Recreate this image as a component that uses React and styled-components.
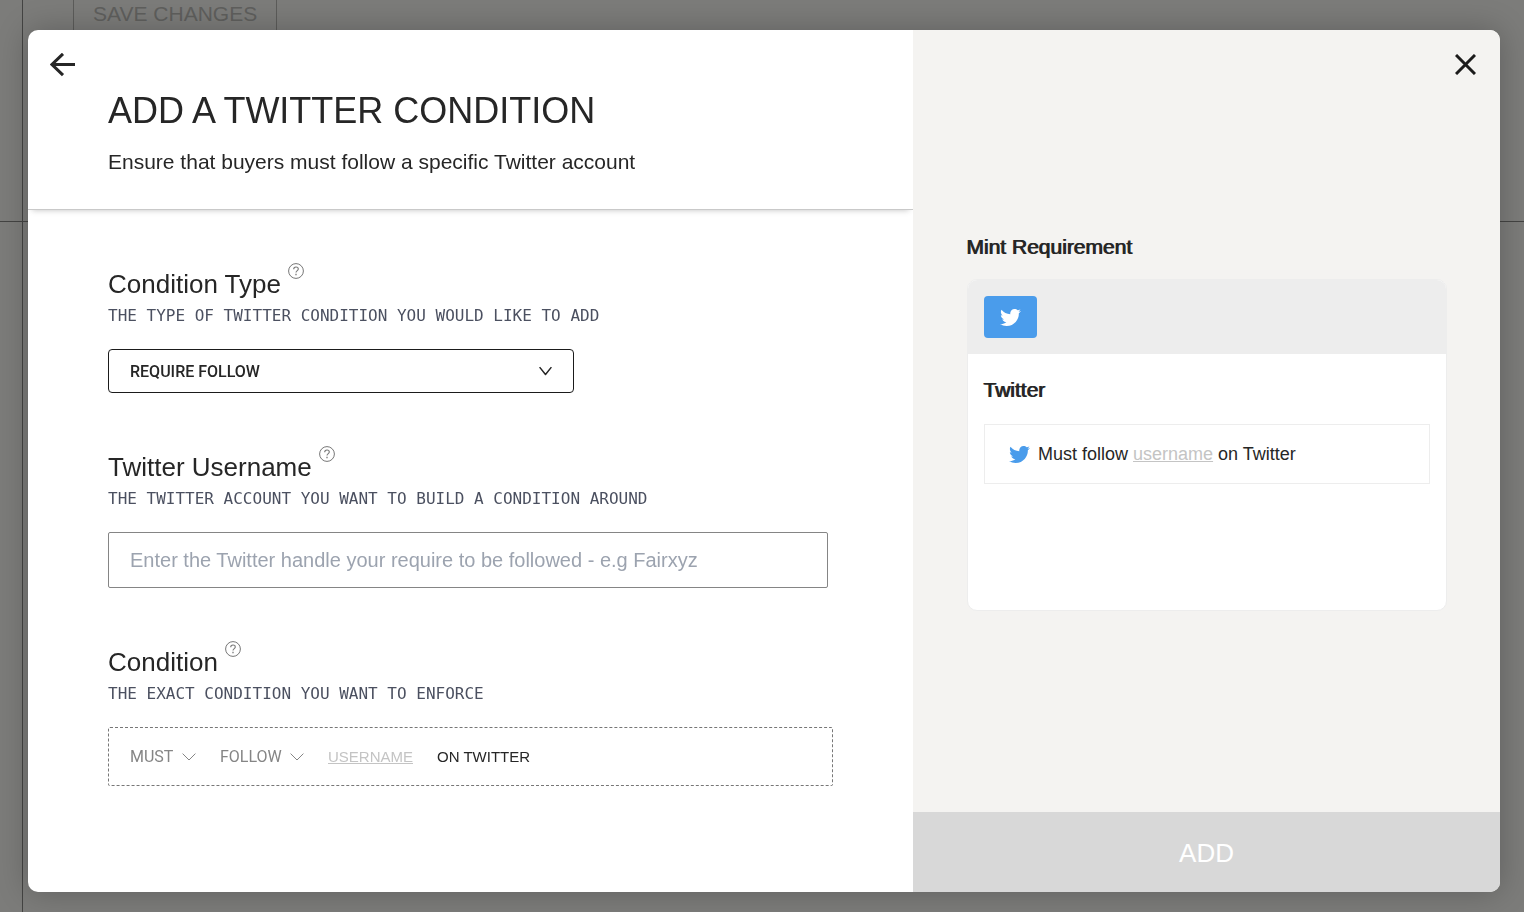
import React from "react";
import styled, { createGlobalStyle } from "styled-components";
import { FaTwitter } from "react-icons/fa";

const sans = '"Liberation Sans", Arial, sans-serif';
const roboto = 'Roboto, "Liberation Sans", sans-serif';
const mono = '"DejaVu Sans Mono", "Liberation Mono", monospace';

const GlobalStyle = createGlobalStyle`
  *, *::before, *::after { box-sizing: border-box; }
  body { margin: 0; background: #7c7c7a; color: #262626; font-family: ${sans}; }
  h1, h2, h3, p { margin: 0; font-weight: 400; }
  button, input, select { font: inherit; color: inherit; }
  button { padding: 0; border: 0; background: none; cursor: pointer; }
`;

const Page = styled.div`
  display: grid;
  grid-template-rows: 222px 1fr;
  height: 100vh;
  overflow: hidden;
`;

const PageRow = styled.div`
  display: flex;
  align-items: flex-start;
  padding-left: 50px;
  margin-left: 22px;
  border-left: 1px solid #444443;
`;

const PageTop = styled.div`
  display: grid;
  border-bottom: 1px solid #444443;
`;

const SaveButton = styled.button`
  && {
    padding: 2px 19px 24px;
    border: 1px solid #5c5c5a;
    border-top: 0;
  }
  color: #5f5f5d;
  font-size: 21px;
  line-height: 24px;
  text-transform: uppercase;
`;

const Overlay = styled.div`
  position: fixed;
  inset: 0;
  display: grid;
  padding: 30px 24px 20px 28px;
`;

const Dialog = styled.div`
  display: grid;
  grid-template-columns: 885fr 587fr;
  overflow: hidden;
  border-radius: 10px;
  background: #fff;
  box-shadow: 0 0 32px rgba(0, 0, 0, 0.24);
`;

const FormPanel = styled.form`
  display: flex;
  flex-direction: column;
  min-width: 0;
`;

const FormHeader = styled.header`
  padding: 21px 22px 33px;
  border-bottom: 1px solid #c9c9c9;
  box-shadow: 0 4px 6px -4px rgba(0, 0, 0, 0.25);
`;

const BackButton = styled.button`
  display: flex;
  align-items: center;
  height: 28px;
`;

const Titles = styled.div`
  display: grid;
  gap: 15px;
  padding: 10px 58px 0;
`;

const Title = styled.h1`
  font-size: 36px;
  line-height: 44px;
  text-transform: uppercase;
`;

const Subtitle = styled.p`
  font-size: 21px;
  line-height: 28px;
`;

const Fields = styled.div`
  display: flex;
  flex-direction: column;
  gap: 56px;
  padding: 56px 80px;
`;

const Field = styled.div`
  display: flex;
  flex-direction: column;
`;

const FieldHead = styled.div`
  display: flex;
  align-items: flex-start;
  gap: 7px;
  height: 36px;
`;

const FieldLabel = styled.label`
  font-size: 26px;
  line-height: 36px;
`;

const HelpButton = styled.button`
  display: flex;
  margin-top: -3px;
  color: #777;
`;

const Hint = styled.p`
  margin-bottom: 19px;
  color: #4b5060;
  font-family: ${mono};
  font-size: 16px;
  line-height: 28px;
  text-transform: uppercase;
`;

const SelectWrap = styled.div`
  position: relative;
  display: flex;
  max-width: ${(p) => p.$max || "none"};

  svg {
    position: absolute;
    right: ${(p) => p.$inset || "0"};
    top: 50%;
    translate: 0 -50%;
    pointer-events: none;
  }
`;

const TypeSelect = styled.select`
  appearance: none;
  width: 100%;
  height: 44px;
  padding: 0 21px;
  border: 1px solid #1b1b1b;
  border-radius: 4px;
  background: #fff;
  font-family: ${roboto};
  font-size: 16px;
  font-weight: 500;
`;

const WordSelect = styled.select`
  appearance: none;
  padding: 0 22px 0 0;
  border: 0;
  background: none;
  color: #858585;
  font-family: ${roboto};
  font-size: 16px;
  line-height: 24px;
`;

const TextInput = styled.input`
  width: 100%;
  max-width: 720px;
  height: 56px;
  padding: 0 21px;
  border: 1px solid #858585;
  border-radius: 2px;
  background: #fff;
  font-size: 20px;

  &::placeholder { color: #9ca3af; opacity: 1; }
`;

const Sentence = styled.div`
  display: flex;
  align-items: center;
  gap: 24px;
  height: 59px;
  padding: 0 21px;
  border: 1px dashed #777;
  border-radius: 2px;
  color: #858585;
`;

const Word = styled.span`
  color: ${(p) => (p.$empty ? "#c4c4c4" : "#262626")};
  font-size: 15px;
  line-height: 24px;
  text-transform: uppercase;
  text-decoration: ${(p) => (p.$empty ? "underline" : "none")};
`;

const PreviewPanel = styled.aside`
  position: relative;
  display: grid;
  grid-template-rows: 1fr 80px;
  min-width: 0;
  background: #f4f3f1;
`;

const CloseButton = styled.button`
  position: absolute;
  top: 24px;
  right: 24px;
  display: flex;
`;

const Preview = styled.section`
  display: flex;
  flex-direction: column;
  justify-content: center;
  gap: 18px;
  padding: 2px 53px 0 54px;
`;

const StrongHeading = styled.h2`
  font-size: 21px;
  line-height: 28px;
  text-shadow: -1px 0 0 currentColor;
`;

const Card = styled.div`
  min-height: 332px;
  overflow: hidden;
  border: 1px solid #ededed;
  border-radius: 10px;
  background: #fff;
`;

const CardHeader = styled.div`
  padding: 16px;
  background: #ededed;
`;

const Badge = styled.div`
  display: grid;
  place-items: center;
  width: 53px;
  height: 42px;
  border-radius: 4px;
  background: #4a9ceb;
  color: #fff;
  font-size: 21px;
`;

const CardBody = styled.div`
  display: grid;
  gap: 20px;
  padding: 22px 16px;
`;

const Rule = styled.div`
  display: flex;
  align-items: center;
  gap: 8px;
  height: 60px;
  padding: 0 24px;
  border: 1px solid #ededed;
  font-size: 18px;
  line-height: 24px;

  svg { color: #4a9ceb; font-size: 21px; }
`;

const Blank = styled.span`
  color: #c4c4c4;
  text-decoration: underline;
`;

const AddButton = styled.button`
  && {
    padding-top: 2px;
    background: #d8d8d8;
  }
  color: #fff;
  font-size: 26px;
  text-transform: uppercase;
`;

function Chevron({ width, height, stroke = 1 }) {
  return (
    <svg width={width} height={height} viewBox={`0 0 ${width} ${height}`} fill="none" stroke="currentColor" strokeWidth={stroke} aria-hidden="true">
      <path d={`M0.6 0.6L${width / 2} ${height - 1}L${width - 0.6} 0.6`} />
    </svg>
  );
}

function Help() {
  return (
    <HelpButton type="button" aria-label="Help">
      <svg width="16" height="16" viewBox="0 0 16 16" fill="none" stroke="currentColor">
        <circle cx="8" cy="8" r="7.4" strokeWidth="1" />
        <path d="M5.7 6.2C5.7 4.8 6.7 4 8 4S10.3 4.8 10.3 6C10.3 7.6 8 7.6 8 9.6" strokeWidth="1.1" />
        <path d="M8 10.8V12.2" strokeWidth="1.3" />
      </svg>
    </HelpButton>
  );
}

function FormField({ id, label, hint, children }) {
  return (
    <Field>
      <FieldHead>
        <FieldLabel htmlFor={id}>{label}</FieldLabel>
        <Help />
      </FieldHead>
      <Hint>{hint}</Hint>
      {children}
    </Field>
  );
}

export default function App() {
  return (
    <>
      <GlobalStyle />
      <Page>
        <PageTop>
          <PageRow>
            <SaveButton type="button">Save changes</SaveButton>
          </PageRow>
        </PageTop>
        <PageRow />
      </Page>
      <Overlay>
        <Dialog role="dialog" aria-modal="true" aria-labelledby="dialog-title">
          <FormPanel>
            <FormHeader>
              <BackButton type="button" aria-label="Back">
                <svg width="26" height="24" viewBox="0 0 26 24" fill="none" stroke="#262626" strokeWidth="3">
                  <path d="M13 .8L2 11.5L13 22.2M2 11.5H25" />
                </svg>
              </BackButton>
              <Titles>
                <Title id="dialog-title">Add a Twitter condition</Title>
                <Subtitle>Ensure that buyers must follow a specific Twitter account</Subtitle>
              </Titles>
            </FormHeader>
            <Fields>
              <FormField id="type" label="Condition Type" hint="The type of Twitter condition you would like to add">
                <SelectWrap $max="466px" $inset="22px">
                  <TypeSelect id="type">
                    <option>REQUIRE FOLLOW</option>
                  </TypeSelect>
                  <Chevron width={13} height={9} stroke={1.5} />
                </SelectWrap>
              </FormField>
              <FormField id="username" label="Twitter Username" hint="The Twitter account you want to build a condition around">
                <TextInput id="username" placeholder="Enter the Twitter handle your require to be followed - e.g Fairxyz" />
              </FormField>
              <FormField id="must" label="Condition" hint="The exact condition you want to enforce">
                <Sentence>
                  <SelectWrap>
                    <WordSelect id="must">
                      <option>MUST</option>
                    </WordSelect>
                    <Chevron width={14} height={8} />
                  </SelectWrap>
                  <SelectWrap>
                    <WordSelect aria-label="Action">
                      <option>FOLLOW</option>
                    </WordSelect>
                    <Chevron width={14} height={8} />
                  </SelectWrap>
                  <Word $empty>username</Word>
                  <Word>on Twitter</Word>
                </Sentence>
              </FormField>
            </Fields>
          </FormPanel>
          <PreviewPanel>
            <CloseButton type="button" aria-label="Close">
              <svg width="21" height="21" viewBox="0 0 21 21" fill="none" stroke="#1b1b1b" strokeWidth="3">
                <path d="M1 1L20 20M20 1L1 20" />
              </svg>
            </CloseButton>
            <Preview>
              <StrongHeading>Mint Requirement</StrongHeading>
              <Card>
                <CardHeader>
                  <Badge><FaTwitter /></Badge>
                </CardHeader>
                <CardBody>
                  <StrongHeading as="h3">Twitter</StrongHeading>
                  <Rule>
                    <FaTwitter />
                    <p>Must follow <Blank>username</Blank> on Twitter</p>
                  </Rule>
                </CardBody>
              </Card>
            </Preview>
            <AddButton type="submit">Add</AddButton>
          </PreviewPanel>
        </Dialog>
      </Overlay>
    </>
  );
}
